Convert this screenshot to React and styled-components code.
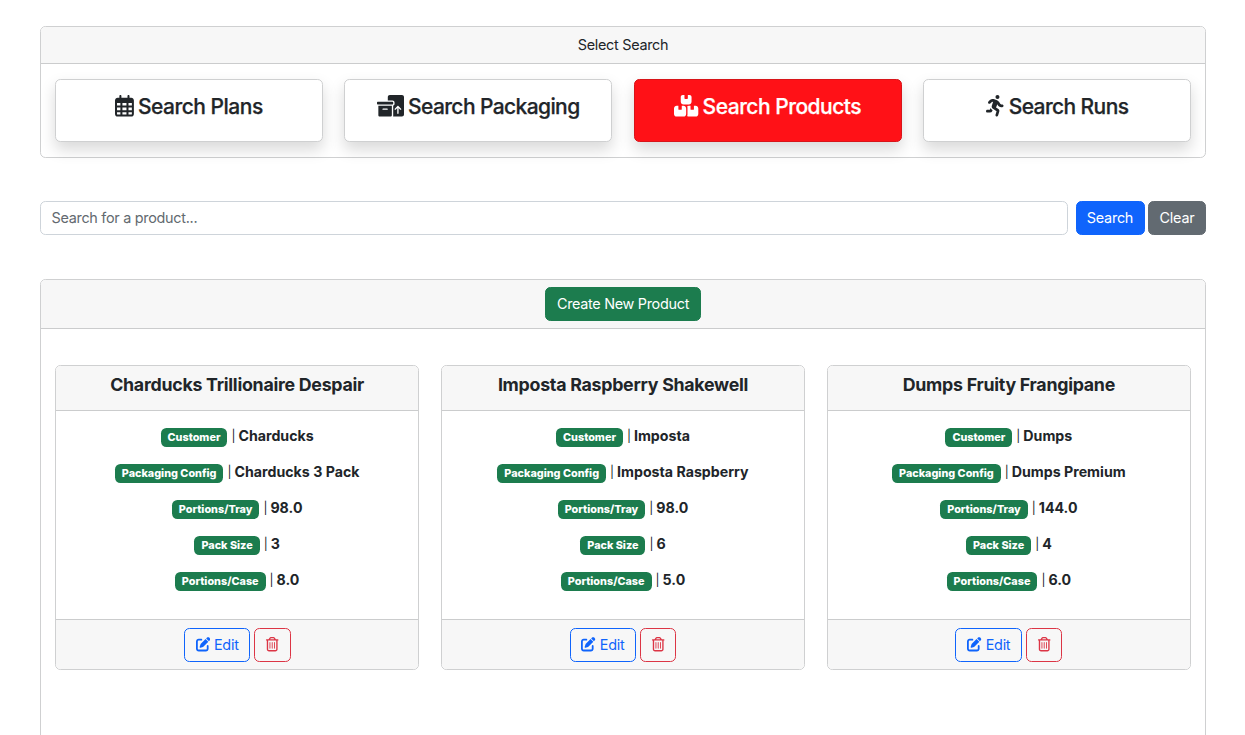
import React from "react";
import styled, { createGlobalStyle } from "styled-components";
import { FaRegCalendarDays, FaBoxesPacking, FaBoxesStacked, FaPersonRunning, FaPenToSquare, FaRegTrashCan } from "react-icons/fa6";

const GlobalStyle = createGlobalStyle`
  *, *::before, *::after { box-sizing: border-box; }
  html { overflow: hidden; }
  body {
    margin: 0;
    height: 735px;
    overflow: hidden;
    background: #fff;
    color: #212529;
    font: 400 14.4px/21.6px Inter, "Liberation Sans", sans-serif;
    letter-spacing: -0.28px;
  }
`;

const Page = styled.main`
  display: flex;
  flex-direction: column;
  padding: 26px 39px 0 40px;
`;

const Panel = styled.section`
  border: 1px solid #cfd0d1;
  border-radius: 5.4px;
  min-height: ${(p) => p.$minHeight || "0"};
`;

const PanelHeader = styled.header`
  display: flex;
  justify-content: center;
  align-items: center;
  height: ${(p) => p.$height};
  background: #f7f7f7;
  border-bottom: 1px solid #cbcccd;
  border-radius: 4.4px 4.4px 0 0;
`;

const Grid = styled.div`
  display: grid;
  grid-template-columns: repeat(${(p) => p.$columns}, 1fr);
  column-gap: 21.6px;
  padding: ${(p) => p.$padding};
`;

const SearchTab = styled.a`
  display: flex;
  justify-content: center;
  height: 63px;
  padding-top: 14px;
  border: 1px solid ${(p) => (p.$active ? "#d81419" : "#cfd0d1")};
  border-radius: 5.4px;
  background: ${(p) => (p.$active ? "#ff1117" : "#fff")};
  color: ${(p) => (p.$active ? "#fff" : "#212529")};
  box-shadow: 0 7.2px 14.4px rgba(0, 0, 0, 0.15);
  font-size: 21px;
  line-height: 26px;
  font-weight: 500;
  -webkit-text-stroke: 0.25px currentColor;
  letter-spacing: ${(p) => p.$tracking};
  white-space: nowrap;

  svg {
    flex: none;
    width: ${(p) => p.$iconWidth};
    height: 21.6px;
    margin: 1px 4px 0 0;
  }
`;

const SearchForm = styled.form`
  display: flex;
  margin: 43px 0 44px;
`;

const SearchInput = styled.input`
  flex: 1;
  height: 34px;
  margin-right: 8px;
  padding: 0 10.8px 2px 10.5px;
  border: 1px solid #ced4da;
  border-radius: 5.4px;
  font: inherit;
  letter-spacing: inherit;
  &::placeholder { color: #636a70; opacity: 1; }
`;

const tones = {
  primary: "#0f64fc",
  secondary: "#626a71",
  success: "#1c7c4e",
  danger: "#dc3545",
};

const Button = styled.button`
  display: inline-flex;
  align-items: center;
  justify-content: center;
  gap: 4px;
  width: ${(p) => p.$width};
  height: 34px;
  padding: 0;
  border: 1px solid ${(p) => tones[p.$tone]};
  border-radius: 5.4px;
  background: ${(p) => (p.$outline ? "transparent" : tones[p.$tone])};
  color: ${(p) => (p.$outline ? tones[p.$tone] : "#fff")};
  font: inherit;
  letter-spacing: ${(p) => p.$tracking || "-0.25px"};
  white-space: nowrap;

  & + & { margin-left: 3.5px; }
  svg { font-size: 14.4px; }
`;

const ProductCard = styled.article`
  display: flex;
  flex-direction: column;
  height: 305px;
  border: 1px solid #cfd0d1;
  border-radius: 5.4px;
`;

const ProductTitle = styled.h5`
  height: 45px;
  margin: 0;
  padding-top: 8px;
  border-bottom: 1px solid #cbcccd;
  border-radius: 4.4px 4.4px 0 0;
  background: #f7f7f7;
  font-size: 17.8px;
  line-height: 22px;
  font-weight: 660;
  letter-spacing: -0.27px;
  text-align: center;
`;

const Details = styled.div`
  flex: 1;
  display: flex;
  flex-direction: column;
  gap: 14.4px;
  padding-top: 14.4px;
`;

const Detail = styled.p`
  display: flex;
  justify-content: center;
  height: 21.6px;
  margin: 0;
`;

const Badge = styled.span`
  height: 19px;
  margin: 2.6px 4px 0 0;
  padding: 0 7px;
  border-radius: 5.4px;
  background: #1c7c4e;
  color: #fff;
  font-size: 10.8px;
  line-height: 19px;
  font-weight: 780;
  letter-spacing: 0.01px;
`;

const Divider = styled.span`
  width: 7px;
  font-size: 12px;
`;

const Value = styled.strong`
  font-size: 14.2px;
  font-weight: 660;
  letter-spacing: 0;
`;

const CardFooter = styled.footer`
  display: flex;
  justify-content: center;
  align-items: center;
  height: 50px;
  border-top: 1px solid #cbcccd;
  border-radius: 0 0 4.4px 4.4px;
  background: #f7f7f7;
`;

const tabs = [
  { label: "Search Plans", Icon: FaRegCalendarDays, iconWidth: "18.9px", tracking: "-0.5px" },
  { label: "Search Packaging", Icon: FaBoxesPacking, iconWidth: "27px", tracking: "-0.6px" },
  { label: "Search Products", Icon: FaBoxesStacked, iconWidth: "24.3px", tracking: "-0.5px", active: true },
  { label: "Search Runs", Icon: FaPersonRunning, iconWidth: "18.9px", tracking: "-0.6px" },
];

const fields = ["Customer", "Packaging Config", "Portions/Tray", "Pack Size", "Portions/Case"];

const products = [
  { name: "Charducks Trillionaire Despair", values: ["Charducks", "Charducks 3 Pack", "98.0", "3", "8.0"] },
  { name: "Imposta Raspberry Shakewell", values: ["Imposta", "Imposta Raspberry", "98.0", "6", "5.0"] },
  { name: "Dumps Fruity Frangipane", values: ["Dumps", "Dumps Premium", "144.0", "4", "6.0"] },
];

function Product({ product }) {
  return (
    <ProductCard>
      <ProductTitle>{product.name}</ProductTitle>
      <Details>
        {fields.map((field, i) => (
          <Detail key={field}>
            <Badge>{field}</Badge>
            <Divider>|</Divider>
            <Value>{product.values[i]}</Value>
          </Detail>
        ))}
      </Details>
      <CardFooter>
        <Button type="button" $tone="primary" $outline $width="66.8px"><FaPenToSquare />Edit</Button>
        <Button type="button" $tone="danger" $outline $width="36.6px" aria-label="Delete"><FaRegTrashCan /></Button>
      </CardFooter>
    </ProductCard>
  );
}

export default function App() {
  return (
    <>
      <GlobalStyle />
      <Page>
        <Panel>
          <PanelHeader $height="37px">Select Search</PanelHeader>
          <Grid $columns={4} $padding="15px 14px">
            {tabs.map(({ label, Icon, iconWidth, tracking, active }) => (
              <SearchTab key={label} $active={active} $iconWidth={iconWidth} $tracking={tracking}><Icon />{label}</SearchTab>
            ))}
          </Grid>
        </Panel>
        <SearchForm>
          <SearchInput placeholder="Search for a product..." />
          <Button type="button" $tone="primary" $width="69px">Search</Button>
          <Button type="button" $tone="secondary" $width="58px">Clear</Button>
        </SearchForm>
        <Panel $minHeight="480px">
          <PanelHeader $height="49px">
            <Button type="button" $tone="success" $width="156px" $tracking="-0.29px">Create New Product</Button>
          </PanelHeader>
          <Grid $columns={3} $padding="36px 14px">
            {products.map((product) => <Product key={product.name} product={product} />)}
          </Grid>
        </Panel>
      </Page>
    </>
  );
}
